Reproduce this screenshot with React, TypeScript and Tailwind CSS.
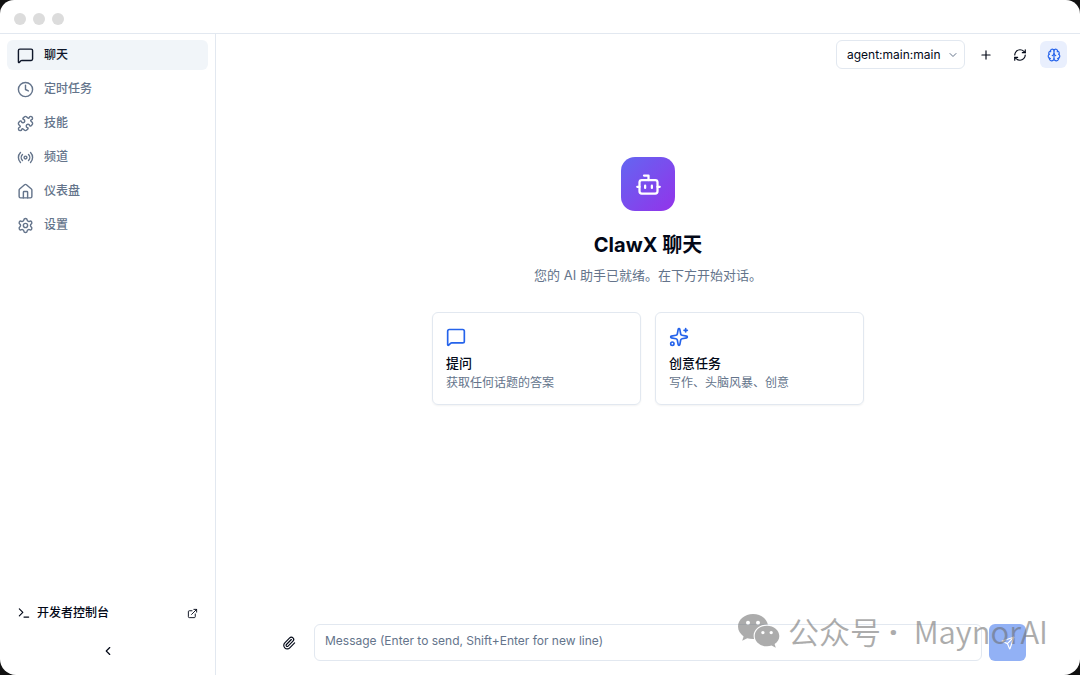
import type { ComponentType, SVGProps } from "react";
import {
  Bot,
  Brain,
  ChevronDown,
  ChevronLeft,
  Clock,
  ExternalLink,
  House,
  MessageSquare,
  Paperclip,
  Plus,
  Puzzle,
  Radio,
  RefreshCw,
  Send,
  Settings,
  Sparkles,
  Terminal,
} from "lucide-react";

type Icon = ComponentType<SVGProps<SVGSVGElement>>;

const navItems: { label: string; icon: Icon; active?: boolean }[] = [
  { label: "聊天", icon: MessageSquare, active: true },
  { label: "定时任务", icon: Clock },
  { label: "技能", icon: Puzzle },
  { label: "频道", icon: Radio },
  { label: "仪表盘", icon: House },
  { label: "设置", icon: Settings },
];

const suggestions: { title: string; text: string; icon: Icon }[] = [
  { title: "提问", text: "获取任何话题的答案", icon: MessageSquare },
  { title: "创意任务", text: "写作、头脑风暴、创意", icon: Sparkles },
];

function TitleBar() {
  return (
    <header className="flex h-[34px] shrink-0 items-center gap-[7px] border-b border-[#e2e8f0] px-3.5 pt-1">
      <span className="size-3 rounded-full bg-[#dcdcdc]" />
      <span className="size-3 rounded-full bg-[#dcdcdc]" />
      <span className="size-3 rounded-full bg-[#dcdcdc]" />
    </header>
  );
}

function Sidebar() {
  return (
    <aside className="flex w-54 shrink-0 flex-col border-r border-[#e2e8f0]">
      <nav className="flex flex-1 flex-col gap-1 px-[7px] pt-1.5">
        {navItems.map(({ label, icon: ItemIcon, active }) => (
          <a
            key={label}
            href="#"
            aria-current={active ? "page" : undefined}
            className={
              active
                ? "flex h-[30px] items-center gap-2.5 rounded-md bg-[#f1f5f9] px-2.5 text-xs font-medium text-[#0f172a]"
                : "flex h-[30px] items-center gap-2.5 rounded-md px-2.5 text-xs font-medium text-[#64748b]"
            }
          >
            <ItemIcon className="size-[17px]" />
            {label}
          </a>
        ))}
      </nav>
      <div className="flex flex-col gap-2 px-[7px] pb-[9px]">
        <button
          type="button"
          className="flex h-[30px] items-center gap-1.5 px-2.5 text-xs font-medium text-[#020817]"
        >
          <Terminal className="size-3.5" />
          开发者控制台
          <ExternalLink className="ml-auto size-[11px]" />
        </button>
        <button
          type="button"
          aria-label="Collapse sidebar"
          className="flex h-[30px] items-center justify-center text-[#020817]"
        >
          <ChevronLeft className="size-3.5" />
        </button>
      </div>
    </aside>
  );
}

function Toolbar() {
  return (
    <div className="flex items-center justify-end gap-[7px] px-[13px] pt-1.5 text-[#020817]">
      <div className="grid items-center">
        <select
          aria-label="Session"
          className="col-start-1 row-start-1 h-[29px] appearance-none rounded-md border border-[#e2e8f0] bg-white pr-[23px] pl-2.5 text-xs"
        >
          <option>agent:main:main</option>
        </select>
        <ChevronDown className="pointer-events-none col-start-1 row-start-1 mr-1.5 size-3 justify-self-end text-[#64748b]" />
      </div>
      <button type="button" aria-label="New session" className="flex size-[27px] items-center justify-center rounded-md">
        <Plus className="size-3.5" />
      </button>
      <button type="button" aria-label="Refresh" className="flex size-[27px] items-center justify-center rounded-md">
        <RefreshCw className="size-3.5" />
      </button>
      <button
        type="button"
        aria-label="Toggle thinking"
        className="flex size-[27px] items-center justify-center rounded-md bg-[#e9effd] text-[#2563eb]"
      >
        <Brain className="size-3.5" />
      </button>
    </div>
  );
}

function Welcome() {
  return (
    <section className="flex flex-1 flex-col items-center px-4 pt-[88px]">
      <div className="flex size-[54px] items-center justify-center rounded-[14px] bg-[linear-gradient(to_bottom_right,#6366f1,#9333ea)] text-white">
        <Bot className="size-[27px]" />
      </div>
      <h1 className="mt-5 text-xl leading-7 font-bold text-[#020817]">ClawX 聊天</h1>
      <p className="mt-1.5 text-[13px] leading-5 text-[#64748b]">您的 AI 助手已就绪。在下方开始对话。</p>
      <div className="mt-[27px] grid w-full max-w-[432px] grid-cols-2 gap-3.5">
        {suggestions.map(({ title, text, icon: CardIcon }) => (
          <article key={title} className="rounded-md border border-[#e2e8f0] px-[13px] pt-3.5 pb-[11px] shadow-xs">
            <CardIcon className="size-5 text-[#2563eb]" />
            <h2 className="mt-1.5 text-[13px] leading-5 font-medium text-[#020817]">{title}</h2>
            <p className="text-xs leading-5 text-[#64748b]">{text}</p>
          </article>
        ))}
      </div>
    </section>
  );
}

function Composer() {
  return (
    <form className="mx-auto flex w-full max-w-[756px] items-end gap-[7px] pb-3.5">
      <button
        type="button"
        aria-label="Attach file"
        className="flex size-[37px] items-center justify-center text-[#020817]"
      >
        <Paperclip className="size-3.5" />
      </button>
      <textarea
        aria-label="Message"
        rows={1}
        placeholder="Message (Enter to send, Shift+Enter for new line)"
        className="h-[37px] flex-1 resize-none rounded-md border border-[#e2e8f0] px-2.5 py-1.5 text-xs leading-5 placeholder:text-[#64748b]"
      />
      <button
        type="submit"
        aria-label="Send"
        className="flex size-[37px] items-center justify-center rounded-md bg-[#92b1f5] text-white"
      >
        <Send className="size-3.5" />
      </button>
    </form>
  );
}

function Watermark() {
  return (
    <div className="pointer-events-none absolute right-8 bottom-[26px] flex items-center gap-2 text-[#6a6a6a] opacity-55">
      <svg viewBox="0 0 42 34" className="h-[34px] w-[42px]" fill="currentColor" aria-hidden="true">
        <path
          fillRule="evenodd"
          d="M15 0C6.700 0 0 5.600 0 12.600c0 4 2.200 7.500 5.600 9.800L4.200 26.700l5-2.500c1.800.5 3.700.8 5.800.8h1.100a11 11 0 0 1-.5-3.200c0-6.300 6-11.300 13.300-11.300h1C28.600 4.500 22.400 0 15 0ZM10 6.700a2 2 0 1 1 0 4 2 2 0 0 1 0-4Zm10 0a2 2 0 1 1 0 4 2 2 0 0 1 0-4Z"
        />
        <path
          fillRule="evenodd"
          d="M29 11.700c-6.900 0-12.300 4.600-12.300 10.300S22.100 32.300 29 32.300c1.600 0 3.200-.3 4.600-.7l4.200 2.200-1.200-3.700c2.900-1.900 4.700-4.800 4.700-8.100 0-5.700-5.500-10.300-12.300-10.300Zm-4.100 5.200a1.700 1.700 0 1 1 0 3.400 1.700 1.700 0 0 1 0-3.400Zm8.300 0a1.700 1.700 0 1 1 0 3.400 1.700 1.700 0 0 1 0-3.400Z"
        />
      </svg>
      <p className="flex items-center font-['Noto_Sans_CJK_SC',sans-serif] text-[31px] leading-9 font-[350] whitespace-nowrap">
        公众号
        <span className="pr-4 pl-2 font-['Noto_Sans',sans-serif] font-bold">·</span>
        MaynorAI
      </p>
    </div>
  );
}

export default function App() {
  return (
    <div className="flex min-h-screen flex-col bg-[#111] font-[Inter,'Noto_Sans_CJK_SC',sans-serif] antialiased">
      <div className="relative flex flex-1 flex-col rounded-t-[14px] rounded-b-[16px] bg-white">
        <TitleBar />
        <div className="flex flex-1">
          <Sidebar />
          <main className="flex min-w-0 flex-1 flex-col">
            <Toolbar />
            <Welcome />
            <Composer />
          </main>
        </div>
        <Watermark />
      </div>
    </div>
  );
}
